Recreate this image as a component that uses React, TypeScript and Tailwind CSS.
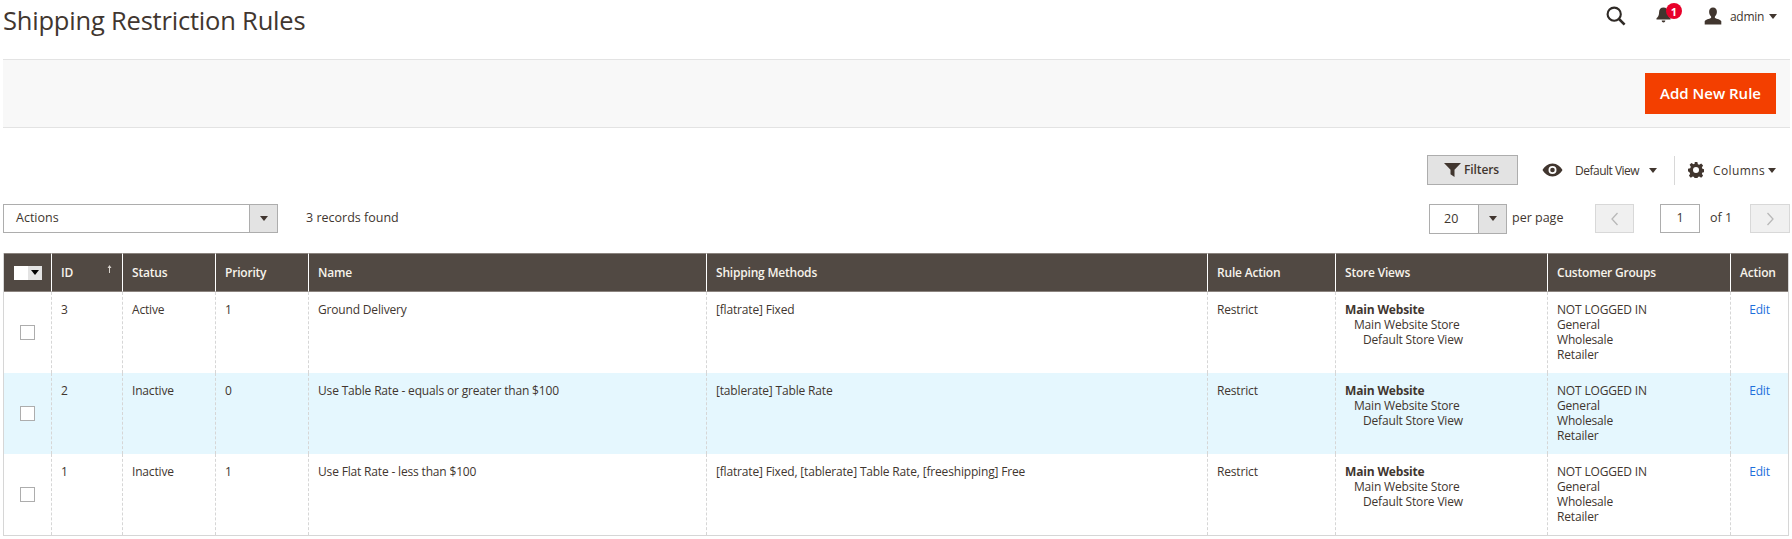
import React from "react";

const Caret = ({ className = "" }: { className?: string }) => (
  <span className={`inline-block w-0 h-0 border-x-[4px] border-x-transparent border-t-[5px] border-t-[#41362f] ${className}`} />
);

const columns = [
  { label: "ID", w: "w-[71px]" },
  { label: "Status", w: "w-[93px]" },
  { label: "Priority", w: "w-[93px]" },
  { label: "Name", w: "w-[398px]" },
  { label: "Shipping Methods", w: "w-[501px]" },
  { label: "Rule Action", w: "w-[128px]" },
  { label: "Store Views", w: "w-[212px]" },
  { label: "Customer Groups", w: "w-[183px]" },
  { label: "Action", w: "w-[58px]" },
];

const rows = [
  { id: 3, status: "Active", priority: 1, name: "Ground Delivery", methods: "[flatrate] Fixed", bg: "bg-white" },
  { id: 2, status: "Inactive", priority: 0, name: "Use Table Rate - equals or greater than $100", methods: "[tablerate] Table Rate", bg: "bg-[#e5f7fe]" },
  { id: 1, status: "Inactive", priority: 1, name: "Use Flat Rate - less than $100", methods: "[flatrate] Fixed, [tablerate] Table Rate, [freeshipping] Free", bg: "bg-white" },
];

const td = "border-l border-dashed border-[#d6d6d6] px-[9px] pt-[10px] pb-0 align-top text-[12px] tracking-[-0.17px] leading-[15px] text-[#41362f]";

export default function App() {
  return (
    <div className="w-[1792px] h-[539px] overflow-hidden bg-white font-['Open_Sans',sans-serif] text-[12.5px] text-[#41362f]">
      {/* Page header */}
      <div className="flex h-[59px] items-start justify-between pl-[3px]">
        <h1 className="text-[25.5px] tracking-[-0.2px] font-normal leading-[40px] text-[#41362f]">Shipping Restriction Rules</h1>
        <div className="flex h-[30px] items-center pr-[15px] pt-[2px]">
          <svg width="20" height="20" viewBox="0 0 20 20" className="mr-[30px]">
            <circle cx="8.2" cy="8.2" r="6.6" fill="none" stroke="#2f2a26" strokeWidth="2.1" />
            <path d="M13 13l5.6 5.6" stroke="#2f2a26" strokeWidth="2.6" />
          </svg>
          <div className="relative mr-[33px] h-[20px] w-[15px]">
            <svg width="15" height="16" viewBox="0 0 15 16" className="absolute left-0 top-[1px]">
              <path d="M7.5 0.5c-2.8 0-4.4 2-4.4 4.6 0 3.4-1.1 5-2.6 6.2v1.2h14v-1.2c-1.5-1.2-2.6-2.8-2.6-6.2 0-2.6-1.6-4.6-4.4-4.6z" fill="#41362f" />
              <path d="M5.7 13.4h3.600c0 1.200-.8 2-1.800 2s-1.800-.8-1.800-2z" fill="#41362f" />
            </svg>
            <span className="absolute left-[10px] top-[-3px] flex h-[16px] w-[16px] items-center justify-center rounded-full bg-[#e8002a] text-[11px] font-bold leading-none text-white">1</span>
          </div>
          <svg width="18" height="18" viewBox="0 0 18 18" className="mr-[8px]">
            <path d="M9 0.500c-2.500 0-3.900 1.900-3.900 4.300 0 2 .8 3.700 2 4.700v1.400c-1.800.8-5.900 1.700-6.400 3.300v3.300h16.600v-3.300c-.5-1.600-4.600-2.500-6.400-3.300v-1.400c1.200-1 2-2.700 2-4.700 0-2.400-1.400-4.300-3.900-4.300z" fill="#41362f" />
          </svg>
          <span className="mr-[5px] text-[12px] leading-[15px] tracking-[-0.3px]">admin</span>
          <Caret className="border-x-[3.5px] border-t-[4px]" />
        </div>
      </div>

      {/* Action bar */}
      <div className="ml-[3px] mr-[2px] flex h-[69px] items-center justify-end border-y border-[#e3e3e3] bg-[#f8f8f8] pr-[14px]">
        <button className="h-[41px] w-[131px] bg-[#f33f00] text-center text-[15px] font-semibold text-white">Add New Rule</button>
      </div>

      {/* Toolbar row 1 */}
      <div className="mt-[27px] flex h-[30px] items-center pl-[1427px]">
        <button className="flex h-[30px] w-[91px] items-center border border-[#adadad] bg-[#e3e3e3] pl-[16px] text-[12px] font-semibold tracking-[-0.1px] text-[#41362f]">
          <svg width="17" height="14" viewBox="0 0 17 14" className="mr-[3px]">
            <path d="M0 0h17l-6.500 6.800v7.200l-4-2.700v-4.500z" fill="#41362f" />
          </svg>
          Filters
        </button>
        <svg width="21" height="14" viewBox="0 0 21 14" className="ml-[24px]">
          <path fillRule="evenodd" d="M10.500 0.500c4.500 0 8 3 10 6.500-2 3.500-5.500 6.500-10 6.500s-8-3-10-6.500c2-3.500 5.500-6.500 10-6.500zm0 2.500a4 4 0 100 8 4 4 0 000-8z" fill="#41362f" />
          <circle cx="10.500" cy="7" r="2.300" fill="#41362f" />
        </svg>
        <span className="ml-[12px] mt-[1px] w-[65px] whitespace-nowrap text-[12px] tracking-[-0.5px]">Default View</span>
        <Caret className="ml-[9px] border-x-[3.5px] border-t-[4px]" />
        <span className="ml-[17px] mr-[13px] h-[29px] w-px bg-[#d8d8d8]" />
        <svg width="16" height="16" viewBox="0 0 24 24">
          <path fillRule="evenodd" fill="#41362f" d="M10 0h4l.8 3.400 2 .8 3-1.800 2.800 2.800-1.800 3 .8 2 3.400.8v4l-3.400.8-.8 2 1.800 3-2.800 2.800-3-1.800-2 .8-.8 3.400h-4l-.8-3.400-2-.8-3 1.800-2.800-2.800 1.800-3-.8-2L0 14v-4l3.400-.8.8-2-1.800-3 2.800-2.800 3 1.800 2-.8zM12 7.500a4.500 4.500 0 100 9 4.500 4.500 0 000-9z" />
        </svg>
        <span className="ml-[9px] mt-[1px] w-[46px] text-[12px] tracking-[0.4px]">Columns</span>
        <Caret className="ml-[9px] border-x-[3.5px] border-t-[4px]" />
      </div>

      {/* Toolbar row 2 */}
      <div className="mt-[19px] flex h-[29px] items-center pl-[3px]">
        <div className="flex h-[29px] w-[275px] border border-[#adadad]">
          <span className="flex-1 pl-[12px] leading-[26px]">Actions</span>
          <span className="flex w-[28px] items-center justify-center border-l border-[#adadad] bg-[#e3e3e3]">
            <Caret className="border-x-[3.5px] border-t-[4px]" />
          </span>
        </div>
        <span className="ml-[28px]">3 records found</span>
        <div className="ml-auto flex items-center">
          <div className="flex h-[30px] w-[78px] border border-[#adadad]">
            <span className="w-[48px] pl-[14px] leading-[27px]">20</span>
            <span className="flex flex-1 items-center justify-center border-l border-[#adadad] bg-[#e3e3e3]">
              <Caret className="border-x-[3.5px] border-t-[4px]" />
            </span>
          </div>
          <span className="ml-[5px] w-[51px] whitespace-nowrap">per page</span>
          <span className="ml-[32px] flex h-[29px] w-[39px] items-center justify-center border border-[#d8d8d8] bg-[#f0f0f0]">
            <svg width="8" height="14" viewBox="0 0 8 14"><path d="M6.500 1L1 7l5.500 6" fill="none" stroke="#b8b8b8" strokeWidth="1.3" /></svg>
          </span>
          <span className="ml-[26px] flex h-[29px] w-[40px] items-center justify-center border border-[#adadad]">1</span>
          <span className="ml-[10px] w-[21px] whitespace-nowrap">of 1</span>
          <span className="ml-[19px] mr-[2px] flex h-[29px] w-[40px] items-center justify-center border border-[#d8d8d8] bg-[#f0f0f0]">
            <svg width="8" height="14" viewBox="0 0 8 14"><path d="M1.500 1L7 7l-5.500 6" fill="none" stroke="#b8b8b8" strokeWidth="1.3" /></svg>
          </span>
        </div>
      </div>

      {/* Grid */}
      <table className="ml-[3px] mt-[20px] w-[1786px] table-fixed border-separate border-spacing-0 border-x border-b border-[#d6d6d6]">
        <thead>
          <tr className="h-[39px]">
            <th className="w-[47px] border-y border-[#8a837e] bg-[#514943] p-0 align-middle">
              <div className="flex justify-center">
                <span className="h-[14px] w-[14px] bg-white" />
                <span className="flex h-[14px] w-[14px] items-center justify-center bg-[#e3e3e3]">
                  <Caret className="border-x-[3.5px] border-t-[4px] border-t-black" />
                </span>
              </div>
            </th>
            {columns.map((c) => (
              <th
                key={c.label}
                className={`${c.w} relative border-y border-l border-y-[#8a837e] border-l-white bg-[#514943] px-[9px] text-left align-middle text-[12px] font-semibold leading-[15px] tracking-[-0.2px] text-[#f7f3eb]`}
              >
                {c.label}
                {c.label === "ID" && (
                  <svg width="5" height="8" viewBox="0 0 5 8" className="absolute right-[10px] top-[11px]">
                    <path d="M2.500 0L4.500 3H3V8H2V3H.5z" fill="#d8d3cd" />
                  </svg>
                )}
              </th>
            ))}
          </tr>
        </thead>
        <tbody>
          {rows.map((r) => (
            <tr key={r.id} className={`h-[81px] ${r.bg}`}>
              <td className="p-0 align-middle">
                <div className="flex justify-center">
                  <span className="h-[15px] w-[15px] border border-[#adadad] bg-white" />
                </div>
              </td>
              <td className={td}>{r.id}</td>
              <td className={td}>{r.status}</td>
              <td className={td}>{r.priority}</td>
              <td className={td}>{r.name}</td>
              <td className={td}>{r.methods}</td>
              <td className={td}>Restrict</td>
              <td className={td}>
                <div className="font-bold">Main Website</div>
                <div className="pl-[9px]">Main Website Store</div>
                <div className="pl-[18px]">Default Store View</div>
              </td>
              <td className={td}>
                <div>NOT LOGGED IN</div>
                <div>General</div>
                <div>Wholesale</div>
                <div>Retailer</div>
              </td>
              <td className={`${td} text-center`}>
                <a className="text-[#1e6fdb]">Edit</a>
              </td>
            </tr>
          ))}
        </tbody>
      </table>
    </div>
  );
}
